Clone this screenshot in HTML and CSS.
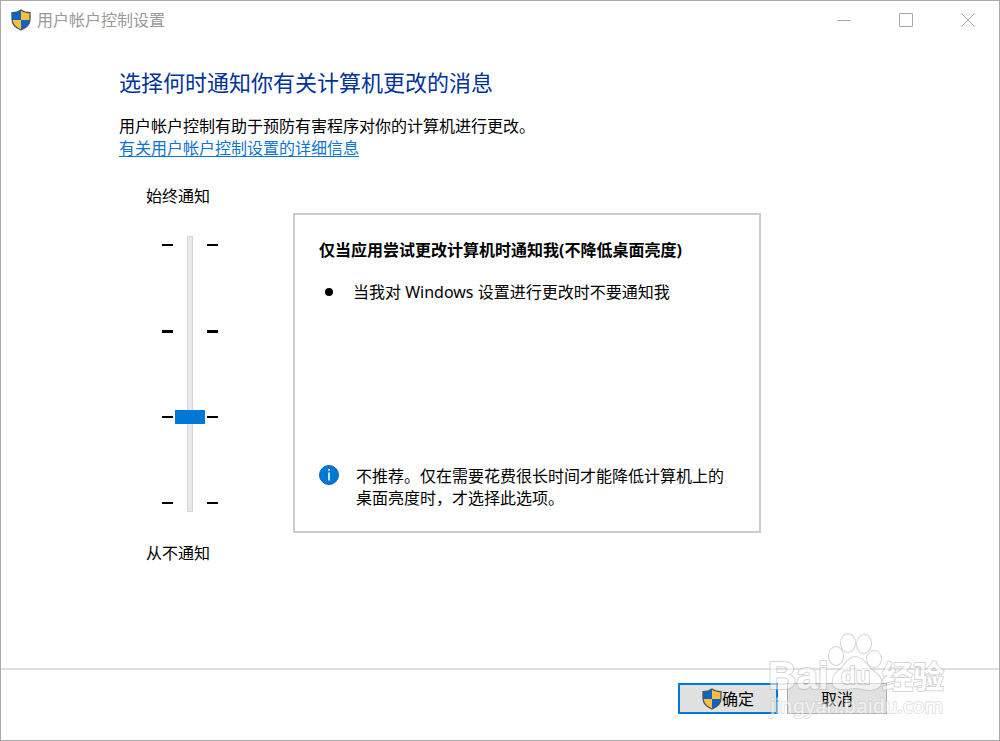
FILE: index.html
```html
<!DOCTYPE html>
<html lang="zh-CN">
<head>
  <meta charset="UTF-8" />
  <meta name="viewport" content="width=device-width, initial-scale=1.0" />
  <title>用户帐户控制设置</title>
  <link rel="stylesheet" href="styles.css">
</head>
<body>
  <!-- Shared icon -->
  <svg class="sprite" aria-hidden="true">
    <symbol id="shield" viewBox="0 0 20 22">
      <clipPath id="shield-clip">
        <path d="M10 1C7.500 2.900 4.500 3.700 1 3.700V10C1 15.500 5 19 10 21C15 19 19 15.500 19 10V3.700C15.500 3.700 12.500 2.900 10 1Z" />
      </clipPath>
      <g clip-path="url(#shield-clip)">
        <path fill="#0e64c4" d="M0 0H10V11H0ZM10 11H20V22H10Z" />
        <path fill="#ffbe3c" d="M10 0H20V11H10ZM0 11H10V22H0Z" />
      </g>
      <path fill="none" stroke="#4b5560" stroke-width="1.300" d="M10 1C7.500 2.900 4.500 3.700 1 3.700V10C1 15.500 5 19 10 21C15 19 19 15.500 19 10V3.700C15.500 3.700 12.500 2.900 10 1Z" />
    </symbol>
  </svg>

  <div class="window">
    <header class="titlebar">
      <svg class="shield" aria-hidden="true"><use href="#shield" /></svg>
      <span class="titlebar-text">用户帐户控制设置</span>
      <div class="window-controls">
        <button type="button" aria-label="最小化">
          <svg viewBox="0 0 14 14"><path d="M0 7.500H14" /></svg>
        </button>
        <button type="button" aria-label="最大化">
          <svg viewBox="0 0 14 14"><path d="M.5.5H13.500V13.500H.5Z" /></svg>
        </button>
        <button type="button" aria-label="关闭">
          <svg viewBox="0 0 14 14"><path d="M.5.5L13.500 13.500M13.500.5L.5 13.500" /></svg>
        </button>
      </div>
    </header>

    <main class="content">
      <h1>选择何时通知你有关计算机更改的消息</h1>
      <p>用户帐户控制有助于预防有害程序对你的计算机进行更改。</p>
      <p><a href="#">有关用户帐户控制设置的详细信息</a></p>

      <div class="settings">
        <div class="level">
          <label for="notify-level">始终通知</label>
          <div class="slider">
            <div class="ticks"><i></i><i class="default"></i><i></i><i></i></div>
            <input type="range" id="notify-level" min="0" max="3" step="1" value="1">
            <div class="ticks"><i></i><i class="default"></i><i></i><i></i></div>
          </div>
          <span>从不通知</span>
        </div>

        <section class="panel">
          <h2>仅当应用尝试更改计算机时通知我(不降低桌面亮度)</h2>
          <ul>
            <li>当我对 Windows 设置进行更改时不要通知我</li>
          </ul>
          <div class="note">
            <svg class="info" viewBox="0 0 20 20" aria-hidden="true">
              <circle cx="10" cy="10" r="9.500" fill="#0078d7" stroke="#1464ad" />
              <path fill="#fff" d="M9.200 4H10.800V5.800H9.200ZM9.200 7.500H10.800V15.500H9.200Z" />
            </svg>
            <p>不推荐。仅在需要花费很长时间才能降低计算机上的桌面亮度时，才选择此选项。</p>
          </div>
        </section>
      </div>
    </main>

    <footer class="actions">
      <button type="button" class="btn btn-primary">
        <svg class="shield" aria-hidden="true"><use href="#shield" /></svg>确定
      </button>
      <button type="button" class="btn">取消</button>
      <svg class="watermark" viewBox="0 0 184 92" aria-hidden="true">
        <ellipse cx="69" cy="24" rx="7" ry="9" />
        <ellipse cx="81" cy="11" rx="7" ry="9" />
        <ellipse cx="97" cy="12" rx="7" ry="9" transform="rotate(8 97 12)" />
        <ellipse cx="107" cy="27" rx="7" ry="8" />
        <path d="M88 25C96 25 99 33 106 39C111 43 115 46 114 51C113 56 108 58 102 58C97 58 93 56 88 56C83 56 79 58 74 57C68 57 65 54 66 48C66 43 70 40 74 37C79 32 81 25 88 25Z" />
        <text class="latin" x="1" y="57">Bai</text>
        <text class="du" x="74" y="52">du</text>
        <text class="cjk" x="115" y="56">经验</text>
        <text class="url" x="3" y="81">jingyan.baidu.com</text>
      </svg>
    </footer>
  </div>
</body>
</html>
```

FILE: styles.css
```css
*, *::before, *::after {
  box-sizing: border-box;
}

body {
  margin: 0;
  font-family: "Noto Sans", "Noto Sans CJK SC", sans-serif;
  font-size: 16px;
  line-height: 22px;
  color: #000;
  background: #fff;
}

h1, h2, p, ul {
  margin: 0;
}

button, input {
  font: inherit;
  color: inherit;
}

.sprite {
  position: absolute;
  width: 0;
  height: 0;
}

.window {
  display: flex;
  flex-direction: column;
  min-height: 100vh;
  border: 1px solid #a9a9a9;
}

.shield {
  flex: none;
  width: 20px;
  height: 22px;
}

/* Title bar */
.titlebar {
  display: flex;
  align-items: center;
  height: 38px;
  padding-left: 10px;
  color: #999;
}

.titlebar-text {
  margin-left: 6px;
}

.window-controls {
  display: flex;
  margin-left: auto;
}

.window-controls button {
  display: flex;
  align-items: center;
  justify-content: center;
  width: 62px;
  height: 38px;
  padding: 0;
  border: 0;
  background: none;
}

.window-controls svg {
  width: 14px;
  height: 14px;
  fill: none;
  stroke: #aaa;
}

/* Main content */
.content {
  flex: 1;
  padding: 28px 118px;
}

h1 {
  margin-bottom: 18px;
  font-size: 22px;
  font-weight: 400;
  line-height: 30px;
  color: #003399;
}

a {
  color: #0f74d1;
  text-underline-offset: 2px;
}

.settings {
  display: flex;
  align-items: flex-start;
  margin-top: 26px;
}

.level {
  display: flex;
  flex-direction: column;
  flex: none;
  width: 174px;
  padding-left: 27px;
}

.slider {
  display: flex;
  gap: 2px;
  height: 276px;
  margin: 29px 0 30px 16px;
}

.ticks {
  display: flex;
  flex-direction: column;
  justify-content: space-between;
  width: 11px;
  padding: 8px 0;
}

.ticks i {
  height: 2px;
  background: #000;
}

.ticks .default {
  height: 3px;
}

input[type="range"] {
  appearance: none;
  writing-mode: vertical-lr;
  direction: rtl;
  width: 30px;
  height: 276px;
  margin: 0;
  background: none;
}

input[type="range"]::-webkit-slider-runnable-track {
  width: 6px;
  border: 1px solid #d6d6d6;
  background: #e7eaea;
}

input[type="range"]::-webkit-slider-thumb {
  appearance: none;
  width: 30px;
  height: 14px;
  margin-left: -13px;
  border: 0;
  background: #0078d7;
}

/* Description of the selected level */
.panel {
  display: flex;
  flex-direction: column;
  flex: 1;
  max-width: 468px;
  min-height: 320px;
  margin-top: 28px;
  padding: 24px 24px 22px;
  border: 2px solid #ccc;
}

h2 {
  font-size: 16px;
  font-weight: 700;
  line-height: 22px;
}

.panel ul {
  margin-top: 20px;
  padding: 0;
  list-style: none;
}

.panel li {
  display: flex;
  align-items: center;
  gap: 20px;
  padding-left: 6px;
}

.panel li::before {
  content: "";
  width: 8px;
  height: 8px;
  border-radius: 50%;
  background: #000;
}

.note {
  display: flex;
  gap: 17px;
  margin-top: auto;
}

.info {
  flex: none;
  width: 20px;
  height: 20px;
}

/* Footer */
.actions {
  position: relative;
  display: flex;
  justify-content: flex-end;
  gap: 9px;
  height: 72px;
  padding: 13px 112px 0 0;
  border-top: 2px solid #dfdfdf;
}

.btn {
  display: flex;
  align-items: center;
  justify-content: center;
  width: 100px;
  height: 31px;
  padding: 0;
  border: 1px solid #adadad;
  background: #e1e1e1;
}

.btn-primary {
  border: 2px solid #0078d7;
}

/* Watermark over the footer */
.watermark {
  position: absolute;
  right: 48px;
  bottom: 16px;
  width: 184px;
  height: 92px;
  fill: #fff;
  stroke: #b4b4b4;
  stroke-width: 2px;
  stroke-linejoin: round;
  paint-order: stroke;
  opacity: 0.55;
  pointer-events: none;
}

.watermark .latin {
  font: 700 39px "Liberation Sans", sans-serif;
}

.watermark .du {
  font: 700 24px "Liberation Sans", sans-serif;
}

.watermark .cjk {
  font: 700 31px "Noto Sans CJK SC", sans-serif;
}

.watermark .url {
  font: 400 20px "Noto Sans", sans-serif;
  stroke: #ccc;
}
```
